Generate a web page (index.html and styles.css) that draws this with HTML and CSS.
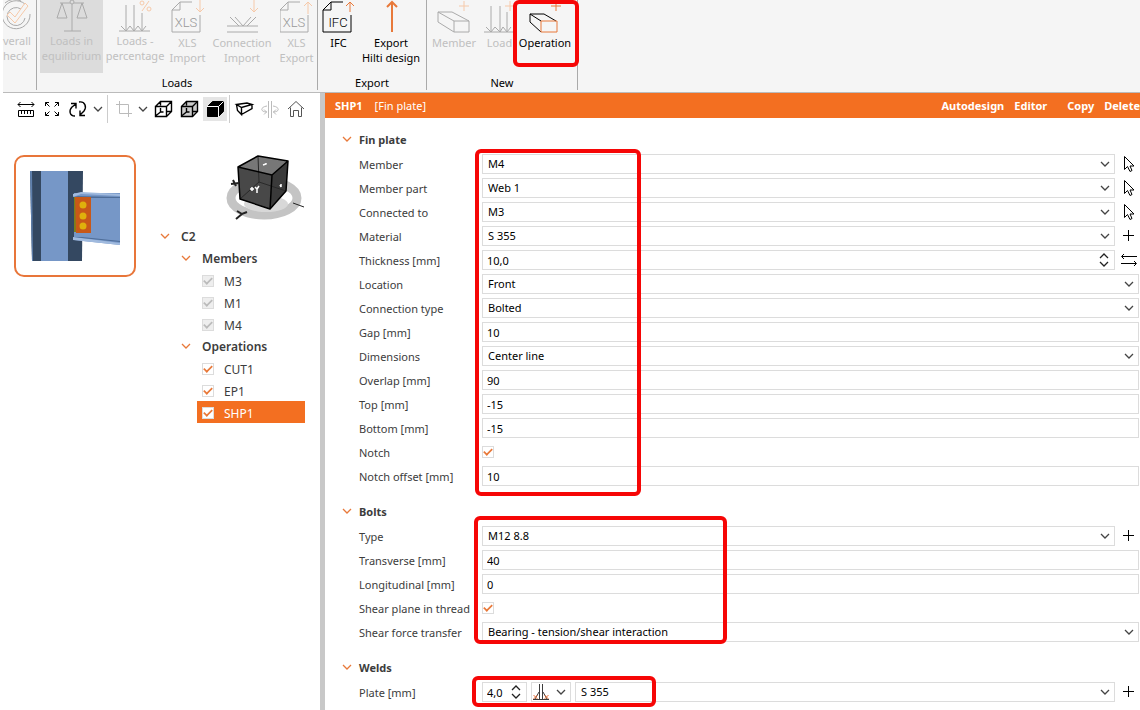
FILE: index.html
```html
<!DOCTYPE html>
<html lang="en">
<head>
<meta charset="UTF-8" />
<title>Connection design</title>
<link rel="stylesheet" href="styles.css">
</head>
<body>
<!-- Shared icons -->
<svg class="sprite" aria-hidden="true">
  <symbol id="chevron" viewBox="0 0 10 10"><path d="M1 3l4 4 4-4" /></symbol>
  <symbol id="spin" viewBox="0 0 12 16"><path d="M2 6l4-4 4 4M2 10l4 4 4-4" /></symbol>
  <symbol id="plus" viewBox="0 0 16 16"><path d="M7.500 2v11M2 7.500h11" /></symbol>
  <symbol id="cursor" viewBox="0 0 16 18"><path d="M3.500 1.500v13l3-3 2.500 5 2-1-2-4.500h4z" /></symbol>
  <symbol id="swap" viewBox="0 0 18 16"><path d="M4 2L1.500 4.500 4 7M2 4.500h15M14 9l2.500 2.500L14 14M1 11.500h15" /></symbol>
</svg>

<header class="ribbon">
  <div class="ribbon-group cut">
    <div class="ribbon-buttons">
      <button class="tool" disabled>
        <svg width="28" height="34" viewBox="3 0 28 34"><path d="M25 4A14 14 0 1 0 30 14M5 3a14 14 0 0 1 16-2M21 9A9 9 0 1 0 25 18" /><path class="accent" d="M7 15l3-3 5 5L25 3l3 3-13 17z" /></svg>
        <span>verall<br>heck</span>
      </button>
    </div>
  </div>
  <div class="ribbon-group loads">
    <div class="ribbon-buttons">
      <button class="tool active" disabled>
        <svg width="32" height="34" viewBox="56 0 32 34"><circle cx="72" cy="2" r="2" /><path d="M72 4v27M64 31h17M60 3h10M74 3h10M62 3l-5 15h10zM82 3l-5 15h10z" /></svg>
        <span>Loads in<br>equilibrium</span>
      </button>
      <button class="tool wide" disabled>
        <svg width="40" height="34" viewBox="115 0 40 34"><path d="M126 5v26M134 5v26M142 13v18M119 31h31M121 26l5 5 4-5 4 5 4-5 4 5 4-5" /><path class="accent" d="M149 1l-7 10" /><circle class="accent" cx="142" cy="3" r="2" /><circle class="accent" cx="149" cy="9" r="2" /></svg>
        <span>Loads -<br>percentage</span>
      </button>
      <button class="tool low" disabled>
        <svg width="34" height="34" viewBox="171 0 34 34"><path d="M192 2h-12l-8 8v22h28V15M180 2v8h-8" /><path class="accent" d="M200 0v12M196 8l4 4 4-4" /><text x="186" y="27">XLS</text></svg>
        <span>XLS<br>Import</span>
      </button>
      <button class="tool wider low" disabled>
        <svg width="36" height="34" viewBox="224 0 36 34"><path d="M227 26h31M227 32h31M230 17l9 9M235 17l8 9M256 17l-9 9M251 17l-8 9" /><path class="accent" d="M254 0v12M250 8l4 4 4-4" /></svg>
        <span>Connection<br>Import</span>
      </button>
      <button class="tool low" disabled>
        <svg width="34" height="34" viewBox="280 0 34 34"><path d="M300 2h-12l-8 8v22h28V15M288 2v8h-8" /><path class="accent" d="M308 14V2M304 6l4-4 4 4" /><text x="294" y="27">XLS</text></svg>
        <span>XLS<br>Export</span>
      </button>
    </div>
    <div class="group-name">Loads</div>
  </div>
  <div class="ribbon-group export">
    <div class="ribbon-buttons">
      <button class="tool low">
        <svg width="34" height="34" viewBox="322 0 34 34"><path d="M343 2h-12l-8 8v22h28V15M331 2v8h-8" /><path class="accent" d="M350 12V2M346 6l4-4 4 4" /><text x="338" y="27">IFC</text></svg>
        <span>IFC</span>
      </button>
      <button class="tool wide low">
        <svg width="20" height="34" viewBox="381 0 20 34"><path class="accent bold" d="M392 32V2M387 7l5-5 5 5" /></svg>
        <span>Export<br>Hilti design</span>
      </button>
    </div>
    <div class="group-name">Export</div>
  </div>
  <div class="ribbon-group new">
    <div class="ribbon-buttons">
      <button class="tool mid low" disabled>
        <svg width="36" height="34" viewBox="436 0 36 34"><path d="M454 21h15v11h-15zM454 21l-16-9v10l16 10M438 12h14l17 9" /><path class="accent" d="M464 1v10M459 6h10" /></svg>
        <span>Member</span>
      </button>
      <button class="tool narrow low" disabled>
        <svg width="34" height="34" viewBox="481 0 34 34"><path d="M489 6v26M498 6v26M505 12v20M482 32h31M484 27l5 5 4-5 5 5 3-5 4 5 4-5" /><path class="accent" d="M508 1v10M503 6h10" /></svg>
        <span>Load</span>
      </button>
      <button class="tool mid low">
        <svg width="36" height="34" viewBox="527 0 36 34"><path d="M541 32l-11-10v-8l11 7M530 14h14l12 7" /><path class="accent" d="M541 21h16v11h-16zM556 1v10M551 6h10" /></svg>
        <span>Operation</span>
      </button>
      <div class="mark mark-operation"></div>
    </div>
    <div class="group-name">New</div>
  </div>
</header>

<main class="workspace">
  <section class="scene">
    <div class="view-tools">
      <button aria-label="Measure"><svg width="24" height="24" viewBox="0 0 24 24"><path d="M4 7.500h16M6.500 5L4 7.500 6.500 10M17.500 5L20 7.500 17.500 10M4.500 13.500h15v6h-15zM7.500 14v3M10.500 14v3M13.500 14v3M16.500 14v3" /></svg></button>
      <button aria-label="Zoom all"><svg width="24" height="24" viewBox="0 0 24 24"><path d="M5.500 9V5.500H9M5.500 5.500l4 4M15 5.500h3.500V9M18.500 5.500l-4 4M5.500 15v3.500H9M5.500 18.500l4-4M18.500 15v3.500H15M18.500 18.500l-4-4" /></svg></button>
      <button aria-label="Refresh"><svg class="strong" width="24" height="24" viewBox="0 0 24 24"><path d="M9 19c-6 0-6-6-3-9l4-3M5 6.500h5v5M13 5c6-1 8 5 5 9l-4 4M19 18.500h-5v-5" /></svg></button>
      <button class="drop" aria-label="Refresh options"><svg class="chev" width="10" height="10"><use href="#chevron" /></svg></button>
      <i class="rule"></i>
      <button class="off" aria-label="Clip"><svg width="24" height="24" viewBox="0 0 24 24"><path d="M8.500 4v12.500H21M5 7.500h12.500V20" /></svg></button>
      <button class="drop" aria-label="Clip options"><svg class="chev" width="10" height="10"><use href="#chevron" /></svg></button>
      <button aria-label="Wireframe"><svg class="strong" width="24" height="24" viewBox="0 0 24 24"><path d="M4.500 9.500h11v10h-11zM4.500 9.500l5-5h11v10l-5 5M15.500 9.500l5-5M9.500 4.500v4M9.500 11v4h3M15 14.500h5M9.500 15l-5 4" /></svg></button>
      <button aria-label="Transparent"><svg class="strong" width="24" height="24" viewBox="0 0 24 24"><path class="gray" d="M4.500 9.500l5-5h11v10l-5 5h-11z" /><path d="M4.500 9.500h11v10M15.500 9.500l5-5M9.500 4.500v4M9.500 11v4h3M15 14.500h5M9.500 15l-5 4" /></svg></button>
      <button class="on" aria-label="Solid"><svg width="24" height="24" viewBox="0 0 24 24"><path class="black" d="M4.500 9.500l5-5h11v10l-5 5h-11z" /><path class="light" d="M4 9.500h11.500V20M15.500 9.500l5-5" /></svg></button>
      <i class="rule last"></i>
      <button aria-label="Member view"><svg class="strong" width="24" height="24" viewBox="0 0 24 24"><path d="M4.500 7.500L15 6l5 1.500-10.500 3zM4.500 7.500l1 6 4 4v-7M9.500 17.500l10.500-6v-4" /></svg></button>
      <button class="off" aria-label="Mirror"><svg width="24" height="24" viewBox="0 0 24 24"><path d="M10.500 4v17M13.500 4v17M9 9c-7 1-7 6 0 6M15 9c7 1 7 6 0 6M6 12.500L8.500 15 6 17.500M18 12.500L15.500 15l2.500 2.500" /></svg></button>
      <button aria-label="Home"><svg class="thin" width="24" height="24" viewBox="0 0 24 24"><path d="M4 12l8-7.500 8 7.500M6.500 10.500v9h3v-6h5v6h3v-9" /></svg></button>
    </div>

    <div class="scene-body">
      <button class="thumb" aria-label="Connection C2">
        <svg width="90" height="90" viewBox="0 0 90 90">
          <path fill="#344861" d="M0 0h53l-1 90H2z" />
          <path fill="#5f80ad" d="M0 0h2l1 90H2z" />
          <path fill="#7697c7" d="M11 0h27v90H11z" />
          <path fill="#7697c7" d="M44 22h46v52l-46-5z" />
          <path fill="#a0bade" d="M43 23l8-2 39 2v2l-39-2-8 3zM43 66l47 6v2l-47-5z" />
          <path fill="#4e6d98" d="M44 25l46 1v1H52zM44 66h8l38 4v1l-38-4z" />
          <path fill="#7a801b" d="M44 26h2v35h-2z" />
          <path fill="#c85818" d="M45 26h16v36H46z" />
          <g fill="#dfb00c"><circle cx="53" cy="34" r="3.500" /><circle cx="53" cy="45" r="3.500" /><circle cx="53" cy="55" r="3.500" /></g>
        </svg>
      </button>
      <div class="browser">
        <svg class="nav-cube" width="80" height="75" viewBox="225 150 80 75">
          <ellipse cx="264" cy="198" rx="33" ry="17" fill="none" stroke="#c4c4c4" stroke-width="9" />
          <ellipse cx="266" cy="204" rx="22" ry="8" fill="#d8d8d8" />
          <path fill="#777" d="M238 167l20-11 30 5-16 14z" />
          <path fill="#484848" d="M238 167l34 8-2 34-30-10z" />
          <path fill="#3a3a3a" d="M272 175l16-14-2 30-16 18z" />
          <path fill="none" stroke="#292929" d="M258 156l1 26-19 17M259 182l27 9" />
          <path fill="none" stroke="#000" stroke-width="1.500" stroke-linejoin="round" d="M238 167l20-11 30 5-16 14zM238 167l2 32 30 10 2-34M270 209l16-18 2-30" />
          <path fill="none" stroke="#fff" stroke-width="1.500" d="M250 189h4M252 187v4M255 187l2 2 2-3M257 189v4M263 165l3-1v-1M280 185l1 2v-3" />
          <path fill="none" stroke="#222" stroke-width="2" d="M231 184l8-1M233 180l3 6M237 211l5 3 5-2M242 214l-6 5" />
          <path fill="none" stroke="#222" d="M293 203l11 4" />
        </svg>
        <ul class="tree">
          <li class="level1"><svg class="fold" width="10" height="10"><use href="#chevron" /></svg>C2</li>
          <li class="level2"><svg class="fold" width="10" height="10"><use href="#chevron" /></svg>Members</li>
          <li class="leaf"><label><input type="checkbox" checked disabled>M3</label></li>
          <li class="leaf"><label><input type="checkbox" checked disabled>M1</label></li>
          <li class="leaf"><label><input type="checkbox" checked disabled>M4</label></li>
          <li class="level2"><svg class="fold" width="10" height="10"><use href="#chevron" /></svg>Operations</li>
          <li class="leaf"><label><input type="checkbox" checked>CUT1</label></li>
          <li class="leaf"><label><input type="checkbox" checked>EP1</label></li>
          <li class="leaf selected"><label><input type="checkbox" checked>SHP1</label></li>
        </ul>
      </div>
    </div>
  </section>

  <section class="properties">
    <div class="title-bar">
      <strong>SHP1</strong>
      <span class="kind">[Fin plate]</span>
      <div class="actions">
        <button>Autodesign</button>
        <button>Editor</button>
        <button class="apart">Copy</button>
        <button>Delete</button>
      </div>
    </div>

    <form class="sheet">
      <section class="block">
        <h2><svg class="fold" width="10" height="10"><use href="#chevron" /></svg>Fin plate</h2>
        <div class="row">
          <label for="member">Member</label>
          <div class="pick"><select id="member"><option>M4</option></select><svg class="chev" width="10" height="10"><use href="#chevron" /></svg></div>
          <button type="button" class="side" aria-label="Pick member"><svg width="16" height="18"><use href="#cursor" /></svg></button>
        </div>
        <div class="row">
          <label for="part">Member part</label>
          <div class="pick"><select id="part"><option>Web 1</option></select><svg class="chev" width="10" height="10"><use href="#chevron" /></svg></div>
          <button type="button" class="side" aria-label="Pick part"><svg width="16" height="18"><use href="#cursor" /></svg></button>
        </div>
        <div class="row">
          <label for="connected">Connected to</label>
          <div class="pick"><select id="connected"><option>M3</option></select><svg class="chev" width="10" height="10"><use href="#chevron" /></svg></div>
          <button type="button" class="side" aria-label="Pick connected member"><svg width="16" height="18"><use href="#cursor" /></svg></button>
        </div>
        <div class="row">
          <label for="material">Material</label>
          <div class="pick"><select id="material"><option>S 355</option></select><svg class="chev" width="10" height="10"><use href="#chevron" /></svg></div>
          <button type="button" class="side" aria-label="Add material"><svg width="16" height="16"><use href="#plus" /></svg></button>
        </div>
        <div class="row">
          <label for="thickness">Thickness [mm]</label>
          <div class="pick"><input id="thickness" type="text" value="10,0"><svg class="spin" width="12" height="16"><use href="#spin" /></svg></div>
          <button type="button" class="side" aria-label="Swap sides"><svg width="18" height="16"><use href="#swap" /></svg></button>
        </div>
        <div class="row full">
          <label for="location">Location</label>
          <div class="pick"><select id="location"><option>Front</option></select><svg class="chev" width="10" height="10"><use href="#chevron" /></svg></div>
        </div>
        <div class="row full">
          <label for="ctype">Connection type</label>
          <div class="pick"><select id="ctype"><option>Bolted</option></select><svg class="chev" width="10" height="10"><use href="#chevron" /></svg></div>
        </div>
        <div class="row full">
          <label for="gap">Gap [mm]</label>
          <input id="gap" type="text" value="10">
        </div>
        <div class="row full">
          <label for="dims">Dimensions</label>
          <div class="pick"><select id="dims"><option>Center line</option></select><svg class="chev" width="10" height="10"><use href="#chevron" /></svg></div>
        </div>
        <div class="row full">
          <label for="overlap">Overlap [mm]</label>
          <input id="overlap" type="text" value="90">
        </div>
        <div class="row full">
          <label for="top">Top [mm]</label>
          <input id="top" type="text" value="-15">
        </div>
        <div class="row full">
          <label for="bottom">Bottom [mm]</label>
          <input id="bottom" type="text" value="-15">
        </div>
        <div class="row full">
          <label for="notch">Notch</label>
          <input id="notch" type="checkbox" checked>
        </div>
        <div class="row full">
          <label for="offset">Notch offset [mm]</label>
          <input id="offset" type="text" value="10">
        </div>
        <div class="mark mark-plate"></div>
      </section>

      <section class="block">
        <h2><svg class="fold" width="10" height="10"><use href="#chevron" /></svg>Bolts</h2>
        <div class="row">
          <label for="bolt">Type</label>
          <div class="pick"><select id="bolt"><option>M12 8.8</option></select><svg class="chev" width="10" height="10"><use href="#chevron" /></svg></div>
          <button type="button" class="side" aria-label="Add bolt type"><svg width="16" height="16"><use href="#plus" /></svg></button>
        </div>
        <div class="row full">
          <label for="transverse">Transverse [mm]</label>
          <input id="transverse" type="text" value="40">
        </div>
        <div class="row full">
          <label for="longitudinal">Longitudinal [mm]</label>
          <input id="longitudinal" type="text" value="0">
        </div>
        <div class="row full">
          <label for="thread">Shear plane in thread</label>
          <input id="thread" type="checkbox" checked>
        </div>
        <div class="row full">
          <label for="transfer">Shear force transfer</label>
          <div class="pick"><select id="transfer"><option>Bearing - tension/shear interaction</option></select><svg class="chev" width="10" height="10"><use href="#chevron" /></svg></div>
        </div>
        <div class="mark mark-bolts"></div>
      </section>

      <section class="block">
        <h2><svg class="fold" width="10" height="10"><use href="#chevron" /></svg>Welds</h2>
        <div class="row">
          <label for="weld">Plate [mm]</label>
          <div class="weld">
            <div class="pick"><input id="weld" type="text" value="4,0"><svg class="spin" width="12" height="16"><use href="#spin" /></svg></div>
            <div class="pick">
              <select aria-label="Weld type"><option></option></select>
              <svg class="weld-icon" width="18" height="18" viewBox="0 0 18 18"><path d="M1 16.500h16M7.500 1v15M10.500 1v15M7 9l-4 7M11 9l4 7" /><path class="seam" d="M1.500 12l4 4M5.500 12l-4 4M12.500 12l4 4M16.500 12l-4 4" /></svg>
              <svg class="chev" width="10" height="10"><use href="#chevron" /></svg>
            </div>
            <div class="pick"><select aria-label="Weld material"><option>S 355</option></select><svg class="chev" width="10" height="10"><use href="#chevron" /></svg></div>
          </div>
          <button type="button" class="side" aria-label="Add weld material"><svg width="16" height="16"><use href="#plus" /></svg></button>
        </div>
        <div class="mark mark-welds"></div>
      </section>
    </form>
  </section>
</main>
</body>
</html>
```

FILE: styles.css
```css
:root {
  --orange: #f36f21;
  --icon-orange: #e8793a;
  --red: #f60606;
  --line: #dcdcdc;
  --text: #3c3c3c;
}
* { box-sizing: border-box; }
body {
  margin: 0;
  height: 100vh;
  display: flex;
  flex-direction: column;
  overflow: hidden;
  font-family: "Noto Sans", "Open Sans", sans-serif;
  font-size: 11px;
  line-height: 15px;
  color: var(--text);
  background: #fff;
}
button, input, select {
  font: inherit;
  color: #000;
}
button {
  padding: 0;
  border: 0;
  background: none;
}
svg {
  display: block;
  flex: none;
  fill: none;
  stroke: currentColor;
}
.sprite {
  position: absolute;
  width: 0;
  height: 0;
}
.fold {
  stroke: var(--icon-orange);
  stroke-width: 1.3;
}

/* Ribbon */
.ribbon {
  flex: none;
  display: flex;
  height: 93px;
  margin-left: 3px;
  background: #f5f5f5;
  border-bottom: 1px solid #bbb;
}
.ribbon-group {
  display: flex;
  flex-direction: column;
  justify-content: space-between;
  height: 90px;
  border-right: 1px solid #aaa;
}
.ribbon-group.cut { width: 34px; }
.ribbon-group.loads { width: 281px; }
.ribbon-group.export { width: 109px; }
.ribbon-group.new { width: 151px; }
.ribbon-buttons {
  position: relative;
  display: flex;
}
.loads .ribbon-buttons { padding-left: 3px; }
.group-name {
  text-align: center;
  color: #000;
}
.tool {
  flex: none;
  display: flex;
  flex-direction: column;
  align-items: center;
  width: 41px;
  height: 73px;
  white-space: nowrap;
}
.tool svg { margin-bottom: -1px; }
.cut .tool {
  align-items: flex-start;
  width: 33px;
  text-align: left;
}
.tool.narrow { width: 37px; }
.tool.mid { width: 54px; }
.tool.wide { width: 64px; }
.tool.wider { width: 68px; }
.tool.low span { margin-top: 2px; }
.tool.active {
  width: 63px;
  background: #dcdcdc;
}
.tool:disabled { color: #c0c0c0; }
.tool:disabled svg { stroke: #aaa; }
.tool .accent { stroke: var(--icon-orange); }
.tool:disabled .accent { stroke: #f6c9a9; }
.tool .bold { stroke-width: 2; }
.tool text {
  font-family: Roboto, sans-serif;
  font-size: 13px;
  font-weight: 300;
  text-anchor: middle;
  fill: currentColor;
  stroke: none;
}
.tool:disabled text { fill: #999; }

/* Red callout frames */
.mark {
  position: absolute;
  border: 4px solid var(--red);
  border-radius: 6px;
  pointer-events: none;
}
.mark-operation {
  top: 0;
  left: 86px;
  width: 66px;
  height: 67px;
}

/* 3D scene */
.workspace {
  flex: 1;
  display: flex;
  min-height: 0;
}
.scene {
  flex: none;
  width: 325px;
  border-right: 5px solid #c8c8c8;
}
.view-tools {
  display: flex;
  align-items: center;
  gap: 2px;
  height: 32px;
  padding-left: 14px;
}
.view-tools button {
  width: 24px;
  height: 24px;
}
.view-tools .drop {
  display: flex;
  align-items: center;
  justify-content: center;
  width: 12px;
}
.view-tools .off { color: #bbb; }
.view-tools .on { background: #e5e5e5; }
.view-tools .gray { fill: #ccc; }
.view-tools .black { fill: #000; }
.view-tools .light { stroke: #fff; }
.view-tools .thin { stroke: #555; }
.view-tools .strong { stroke-width: 1.4; }
.rule {
  width: 1px;
  height: 28px;
  margin: 0 1px;
  background: #ccc;
}
.rule.last { margin: 0; }
.chev {
  stroke: #444;
  stroke-width: 1.3;
}
.scene-body {
  display: flex;
  justify-content: space-between;
  align-items: flex-start;
  padding: 25px 15px 0 14px;
}
.thumb {
  display: flex;
  align-items: center;
  justify-content: center;
  width: 122px;
  height: 122px;
  margin-top: 5px;
  border: 2px solid #e8763a;
  border-radius: 10px;
}
.thumb svg { stroke: none; }
.browser { width: 145px; }
.nav-cube {
  margin-left: auto;
  stroke: none;
}
.tree {
  list-style: none;
  margin: 0;
  padding: 0;
  font-size: 12px;
}
.tree li {
  display: flex;
  align-items: center;
  gap: 11px;
  height: 22px;
  font-weight: 600;
}
.tree .level2 { padding-left: 21px; }
.tree .leaf {
  margin-left: 37px;
  padding-left: 5px;
  font-weight: 400;
}
.tree label {
  display: flex;
  align-items: center;
  gap: 10px;
  padding-top: 2px;
}
.tree .selected {
  background: var(--orange);
  color: #fff;
}

/* Check boxes */
input[type="checkbox"] {
  appearance: none;
  display: grid;
  place-items: center;
  width: 12px;
  height: 12px;
  margin: 0;
  border: 1px solid var(--line);
  background: #fff;
}
input[type="checkbox"]:checked::before {
  content: "";
  width: 8px;
  height: 4px;
  margin-top: -2px;
  border: solid var(--icon-orange);
  border-width: 0 0 2px 2px;
  transform: rotate(-45deg) scale(0.85);
}
input[type="checkbox"]:disabled { background: #eee; }
input[type="checkbox"]:disabled::before { border-color: #bbb; }

/* Property sheet */
.properties {
  flex: 1;
  min-width: 0;
}
.title-bar {
  display: flex;
  align-items: center;
  height: 25px;
  padding-left: 10px;
  background: var(--orange);
  color: #fff;
}
.title-bar strong, .title-bar button { font-weight: 700; }
.kind { margin-left: 12px; }
.actions {
  display: flex;
  gap: 10px;
  margin-left: auto;
}
.actions button { color: #fff; }
.actions .apart { margin-left: 10px; }
.sheet {
  display: flex;
  flex-direction: column;
  gap: 12px;
  padding: 10px 1px 0 17px;
}
.block { position: relative; }
h2 {
  display: flex;
  align-items: center;
  gap: 7px;
  height: 24px;
  margin: 0;
  padding-bottom: 2px;
  font-size: 11px;
  font-weight: 700;
}
.row {
  display: grid;
  grid-template-columns: 123px 1fr 24px;
  align-items: center;
  height: 24px;
  padding-left: 17px;
}
.row.full { grid-template-columns: 123px 1fr; }
.row label { white-space: nowrap; }
.pick {
  display: grid;
  align-items: center;
}
.pick > * { grid-area: 1 / 1; }
.pick > svg {
  justify-self: end;
  margin-right: 5px;
  pointer-events: none;
}
.pick > .weld-icon {
  justify-self: start;
  margin-left: 1px;
}
.seam { stroke: #e8703a; }
select, input[type="text"] {
  appearance: none;
  width: 100%;
  min-width: 0;
  height: 20px;
  padding: 0 5px 2px;
  border: 1px solid var(--line);
  border-radius: 0;
  background: #fff;
  outline: none;
}
input[type="text"] { padding: 0 4px; }
.spin {
  stroke: #222;
  stroke-width: 1.3;
}
.weld {
  display: grid;
  grid-template-columns: 45px 40px 1fr;
  gap: 4px;
}
.side {
  justify-self: end;
  display: flex;
  justify-content: center;
  width: 20px;
}
.mark-plate {
  top: 21px;
  left: 133px;
  width: 166px;
  height: 347px;
}
.mark-bolts {
  top: 16px;
  left: 132px;
  width: 253px;
  height: 128px;
}
.mark-welds {
  top: 20px;
  left: 130px;
  width: 184px;
  height: 31px;
}
```
